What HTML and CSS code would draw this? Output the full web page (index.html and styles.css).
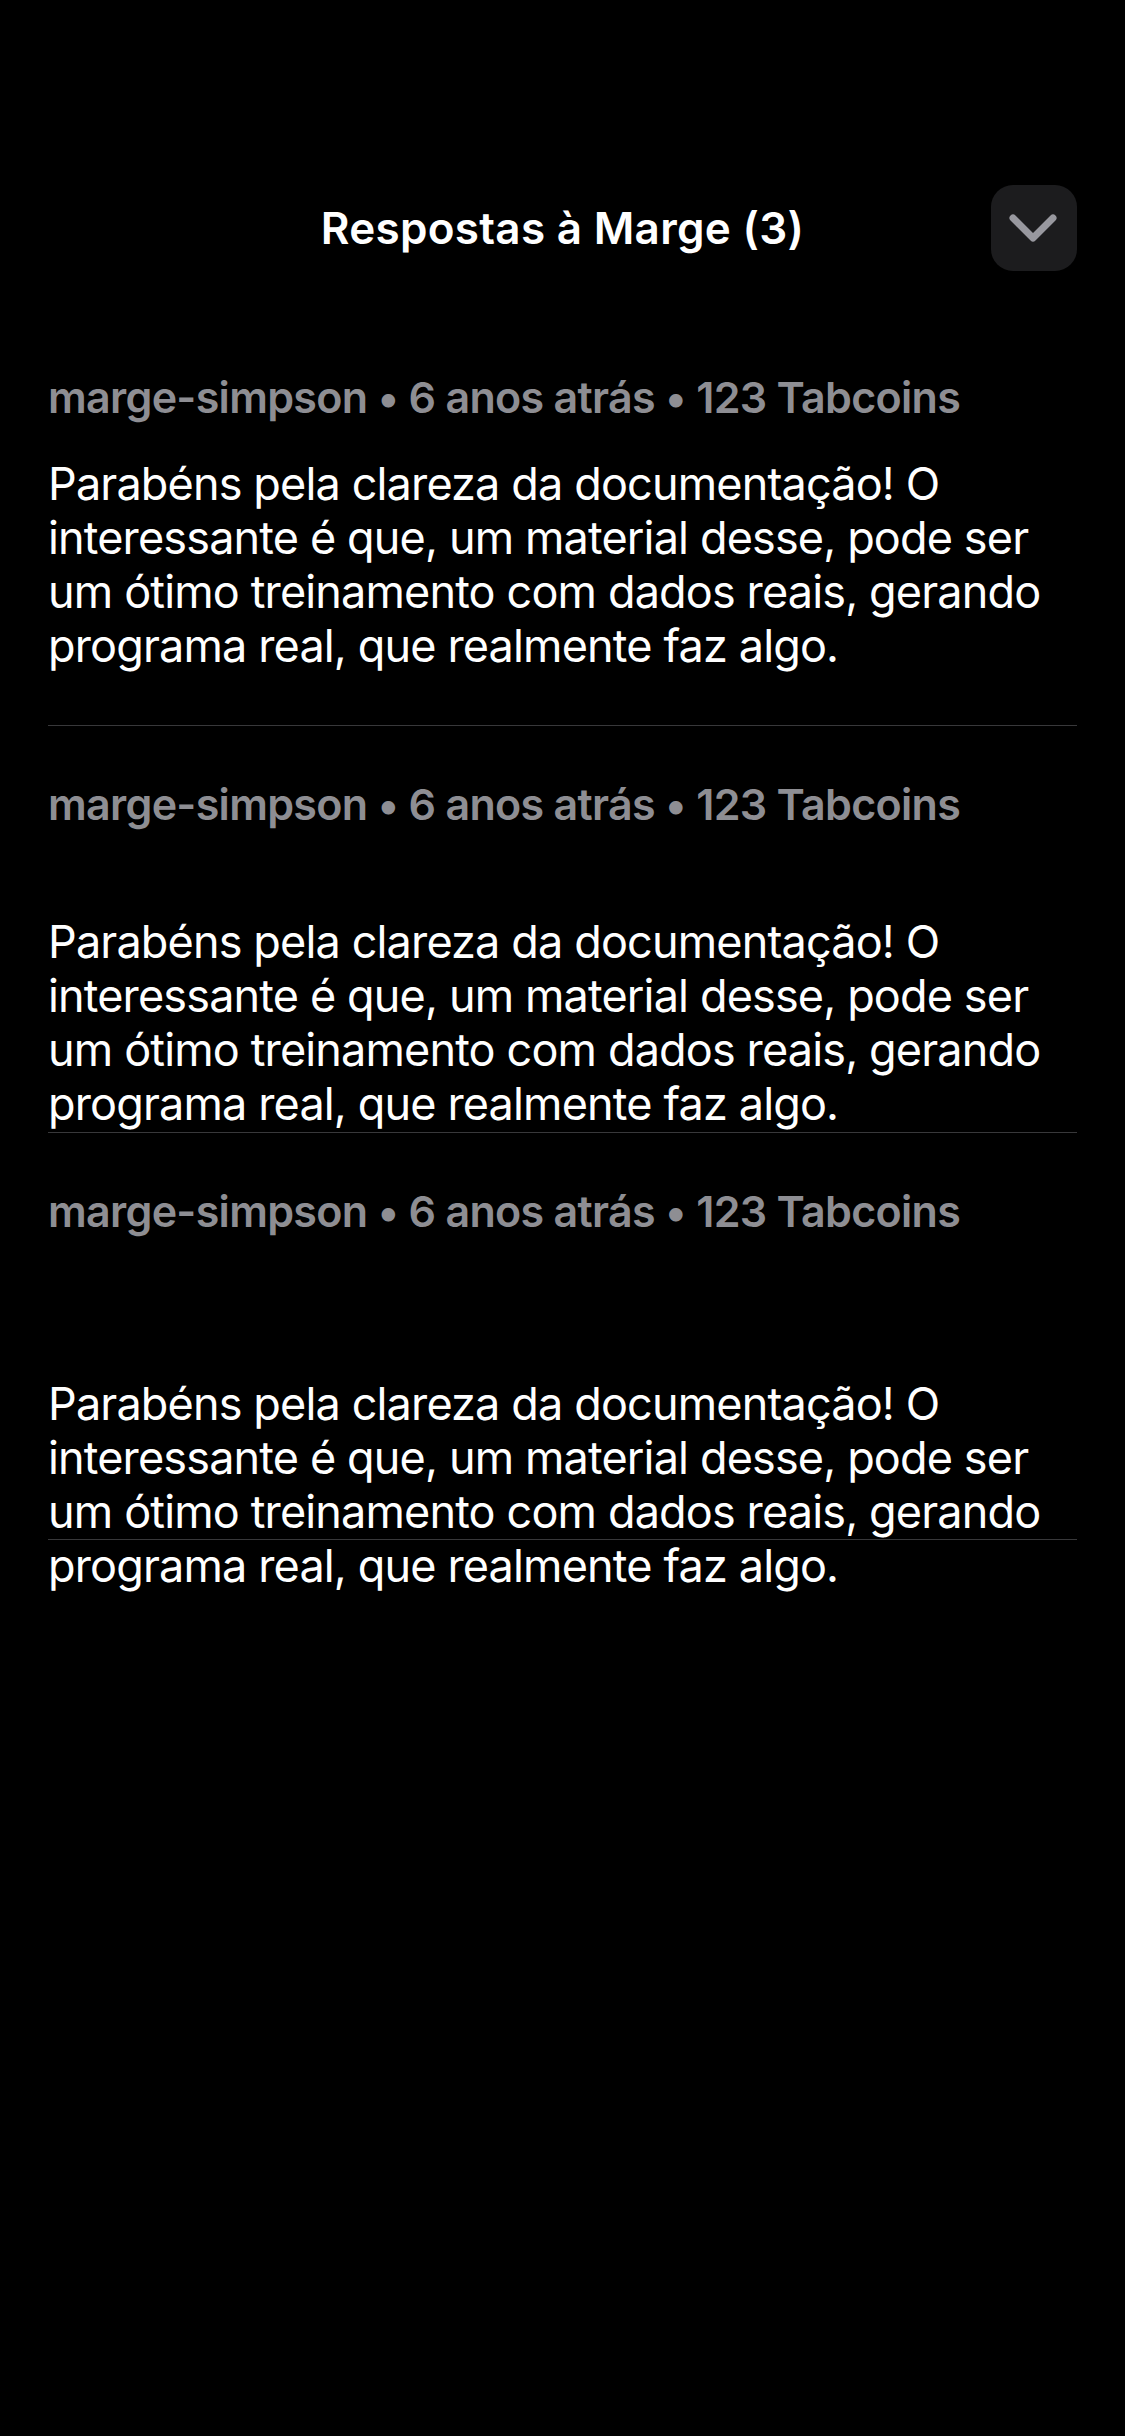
FILE: index.html
```html
<!DOCTYPE html>
<html lang="pt-BR">
<head>
<meta charset="utf-8">
<title>Respostas à Marge</title>
<link rel="stylesheet" href="styles.css">
</head>
<body>
<div class="screen">
  <header class="header">
    <span class="header-spacer"></span>
    <h1 class="title">Respostas à Marge (3)</h1>
    <button class="collapse-btn" aria-label="Fechar">
      <svg class="chevron" width="86" height="86" viewBox="0 0 86 86">
        <path d="M22 33 L42 53 L62 33" fill="none" stroke="#98989f" stroke-width="7" stroke-linecap="round" stroke-linejoin="round"/>
      </svg>
    </button>
  </header>

  <ul class="replies">
    <li class="reply">
      <div class="meta">marge-simpson • 6 anos atrás • 123 Tabcoins</div>
      <p class="body body-1">Parabéns pela clareza da documentação! O interessante é que, um material desse, pode ser um ótimo treinamento com dados reais, gerando programa real, que realmente faz algo.</p>
    </li>
    <li class="reply">
      <div class="meta">marge-simpson • 6 anos atrás • 123 Tabcoins</div>
      <p class="body body-2">Parabéns pela clareza da documentação! O interessante é que, um material desse, pode ser um ótimo treinamento com dados reais, gerando programa real, que realmente faz algo.</p>
    </li>
    <li class="reply">
      <div class="meta">marge-simpson • 6 anos atrás • 123 Tabcoins</div>
      <p class="body body-3">Parabéns pela clareza da documentação! O interessante é que, um material desse, pode ser um ótimo treinamento com dados reais, gerando programa real, que realmente faz algo.</p>
    </li>
  </ul>
</div>
</body>
</html>
```

FILE: styles.css
```css
* {
  box-sizing: border-box;
}

html, body {
  margin: 0;
  padding: 0;
  background: #000;
}

body {
  width: 1125px;
  min-height: 2436px;
  font-family: Inter, "Noto Sans", "Liberation Sans", sans-serif;
  color: #fff;
}

.screen {
  padding: 185px 48px 0 48px;
}

.header {
  display: grid;
  grid-template-columns: 86px 1fr 86px;
  align-items: center;
  height: 86px;
}

.title {
  margin: 0;
  text-align: center;
  font-size: 44px;
  font-weight: 600;
  letter-spacing: 0.3px;
  line-height: 52px;
  color: #fff;
}

.collapse-btn {
  width: 86px;
  height: 86px;
  padding: 0;
  border: none;
  border-radius: 22px;
  background: #1c1c1e;
  display: flex;
  align-items: center;
  justify-content: center;
}

.chevron {
  display: block;
}

.replies {
  list-style: none;
  margin: 48px 0 0 0;
  padding: 0;
}

.reply {
  height: 407px;
  border-bottom: 1.5px solid #38383a;
  padding-top: 51px;
  overflow: visible;
}

.meta {
  font-size: 43px;
  line-height: 54px;
  font-weight: 600;
  color: #8e8e93;
  letter-spacing: -0.7px;
  white-space: nowrap;
}

.body {
  margin: 0;
  font-size: 45px;
  line-height: 54px;
  font-weight: 400;
  color: #fff;
  letter-spacing: -0.85px;
}

.body-1 {
  margin-top: 33px;
}

.body-2 {
  margin-top: 84px;
}

.body-3 {
  margin-top: 139px;
}
```
